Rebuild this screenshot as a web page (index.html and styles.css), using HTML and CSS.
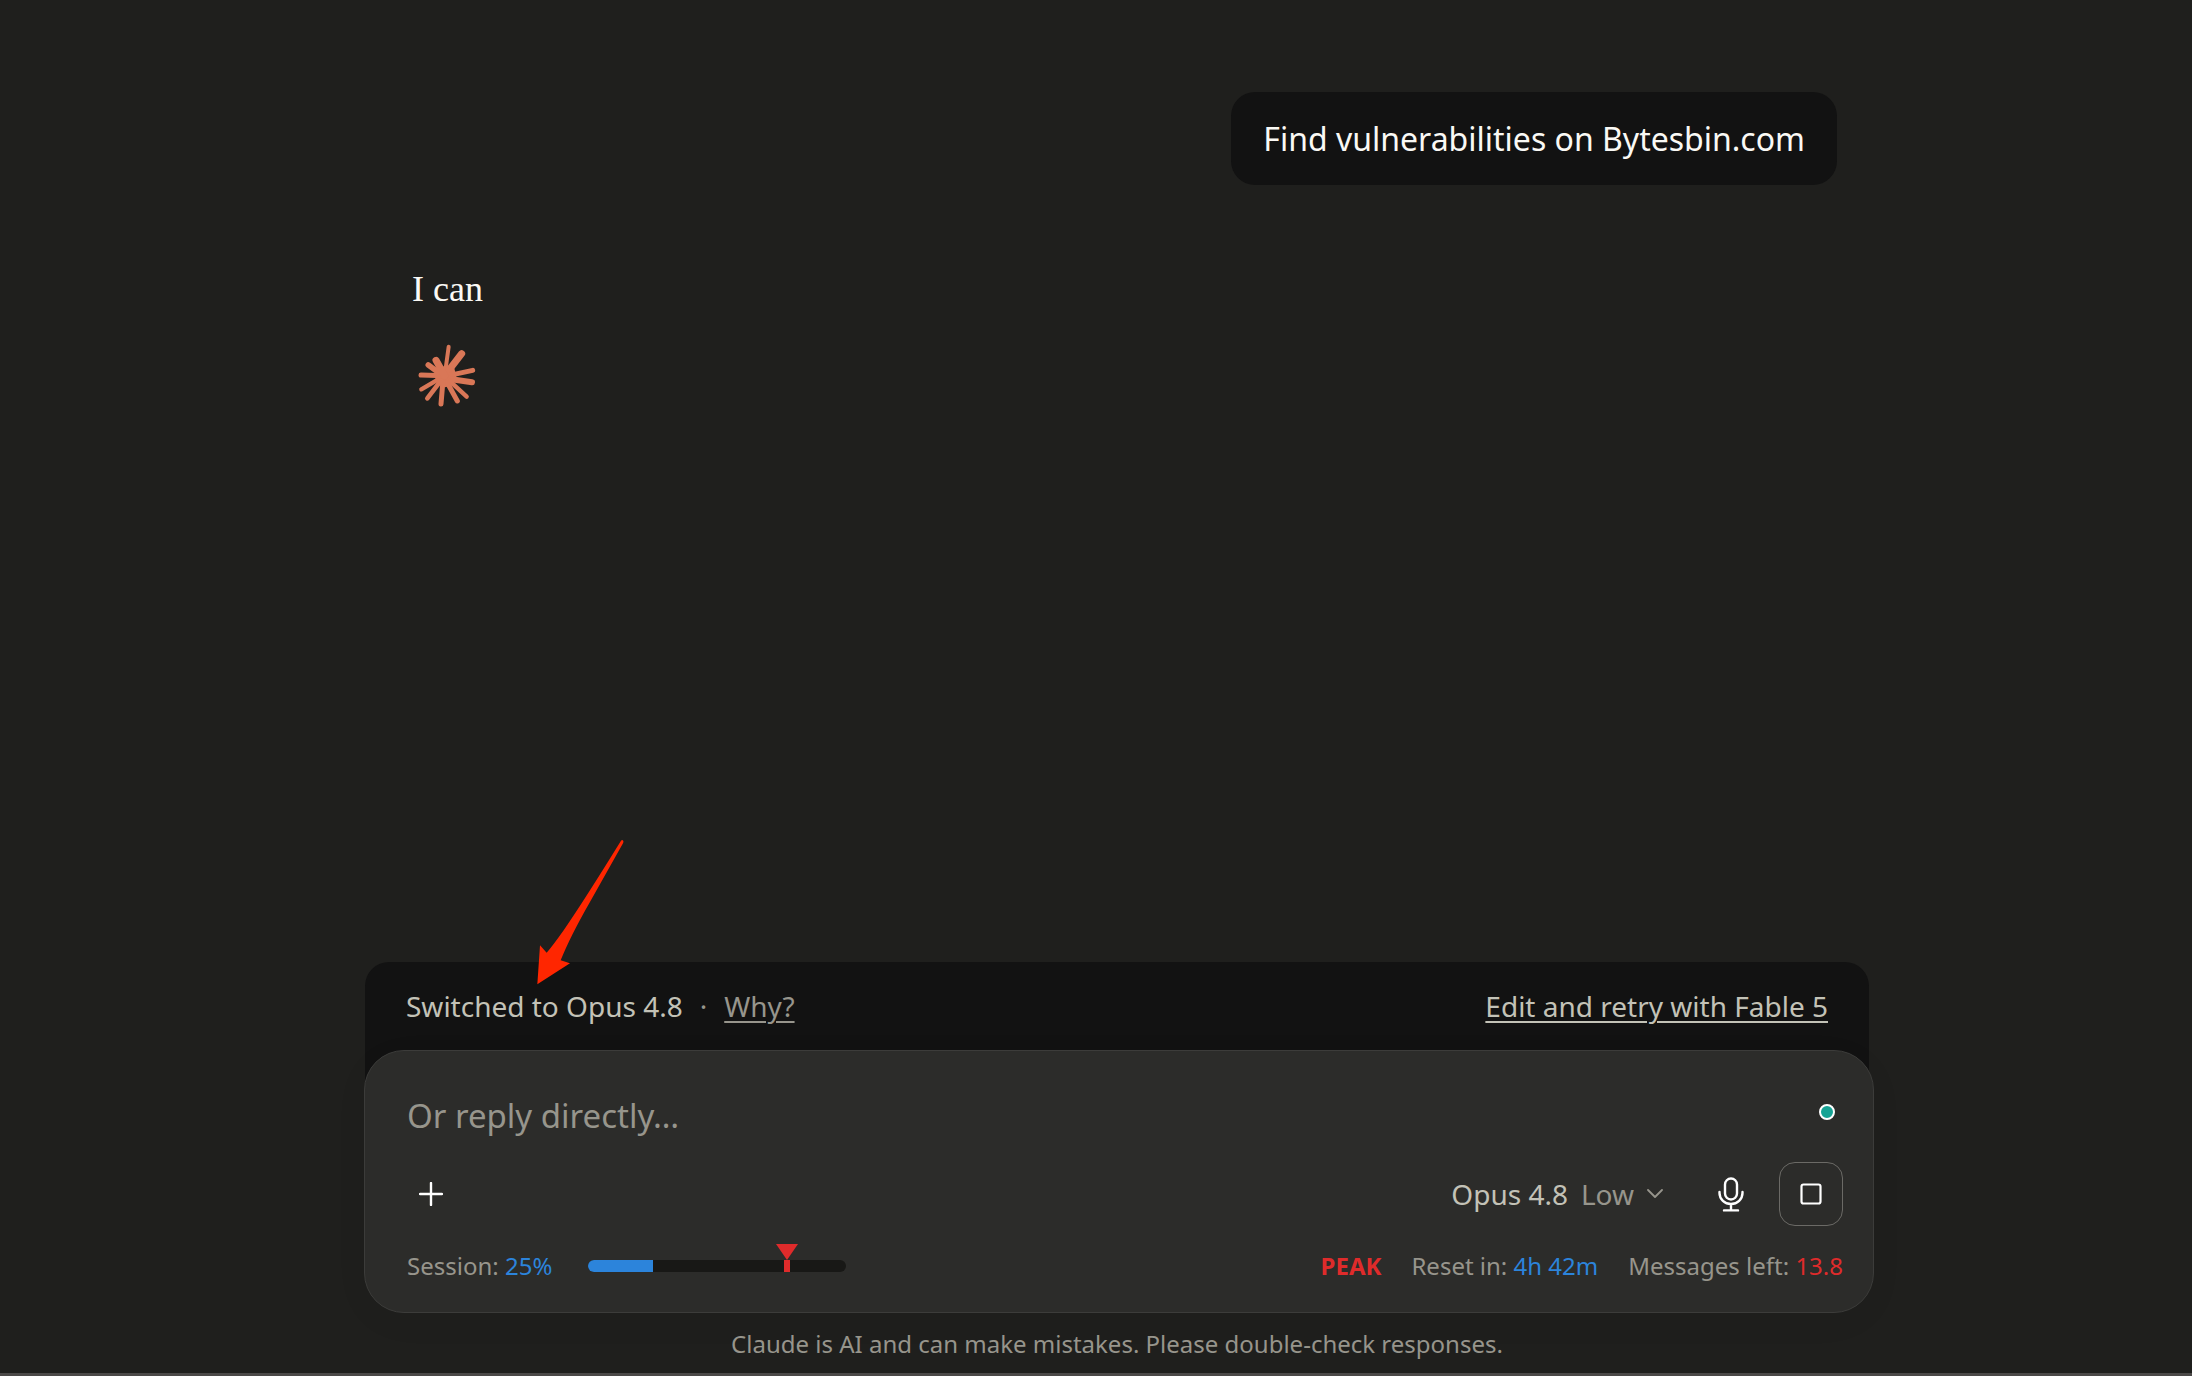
FILE: index.html
```html
<!DOCTYPE html>
<html lang="en">
<head>
  <meta charset="utf-8">
  <meta name="viewport" content="width=device-width, initial-scale=1">
  <title>Claude</title>
  <link rel="stylesheet" href="styles.css">
</head>
<body>
  <main class="page">
    <section class="thread">
      <p class="bubble">Find vulnerabilities on Bytesbin.com</p>
      <p class="reply">I can</p>
      <svg class="burst" viewBox="23 28 174 189" aria-hidden="true">
        <path d="M80 106 L106 92 L132 101 L138 126 L128 152 L104 158 L82 147 L72 124Z" fill="currentColor"/>
        <g stroke="currentColor" stroke-linecap="round" fill="none">
          <path stroke-width="12" d="M103 123 L115 36"/>
          <path stroke-width="21" d="M103 123 L154 57"/>
          <path stroke-width="15" d="M103 125 L187 107"/>
          <path stroke-width="18" d="M103 131 L185 143"/>
          <path stroke-width="13" d="M103 125 L169 186"/>
          <path stroke-width="15" d="M103 130 L141 199"/>
          <path stroke-width="15" d="M99 125 L92 208"/>
          <path stroke-width="14" d="M103 123 L51 191"/>
          <path stroke-width="13" d="M103 123 L33 164"/>
          <path stroke-width="15" d="M103 123 L32 121"/>
          <path stroke-width="17" d="M103 127 L54 91"/>
          <path stroke-width="21" d="M103 123 L77 77"/>
        </g>
      </svg>
    </section>

    <section class="dock">
      <div class="notice">
        <div class="notice-text">
          <span>Switched to Opus 4.8</span>
          <span class="muted">·</span>
          <a class="muted" href="#why">Why?</a>
        </div>
        <a href="#retry">Edit and retry with Fable 5</a>
        <svg class="arrow" viewBox="561 54 264 444" aria-hidden="true">
          <path fill="#ff2600" d="M562 493 L570 376 L590 398 Q608 377 640 332 Q700 245 813 62 Q817 58 820 63 Q821 66 819 70 L722 242 Q660 350 632 421 L660 430Z"/>
        </svg>
      </div>

      <form class="composer">
        <div class="entry">
          <input class="entry-input" type="text" aria-label="Reply" placeholder="Or reply directly…">
          <span class="dot"></span>
        </div>
        <div class="tools">
          <button class="icon-button" type="button" aria-label="Add">
            <svg width="24" height="24" viewBox="0 0 24 24"><path d="M12 1V23M1 12H23" stroke="currentColor" stroke-width="2.4" stroke-linecap="round"/></svg>
          </button>
          <button class="model" type="button" aria-haspopup="menu">
            <span>Opus 4.8</span>
            <span class="muted">Low</span>
            <svg class="chevron" width="16" height="10" viewBox="0 0 16 10"><path d="M1 1L8 8L15 1" fill="none" stroke="currentColor" stroke-width="1.8" stroke-linecap="round" stroke-linejoin="round"/></svg>
          </button>
          <button class="icon-button" type="button" aria-label="Dictate">
            <svg width="26" height="35" viewBox="0 0 26 35" fill="none" stroke="currentColor" stroke-width="2.4" stroke-linecap="round"><rect x="7" y="1.5" width="12" height="21" rx="6"/><path d="M1.5 15V16A11.5 11 0 0 0 24.5 16V15M13 27V33M6 33.4H20"/></svg>
          </button>
          <button class="stop" type="button" aria-label="Stop">
            <svg width="22" height="22" viewBox="0 0 22 22"><rect x="1.5" y="1.5" width="19" height="19" rx="2" fill="none" stroke="currentColor" stroke-width="2.2"/></svg>
          </button>
        </div>
        <div class="status">
          <span>Session: <span class="blue">25%</span></span>
          <div class="meter" role="meter" aria-label="Session" aria-valuenow="25">
            <div class="meter-fill" style="width: 25%"></div>
            <svg class="marker" style="left: 77%" width="22" height="28" viewBox="0 0 22 28" aria-hidden="true"><path d="M0 0H22L11 16ZM8 16H14V28H8Z" fill="currentColor"/></svg>
          </div>
          <div class="limits">
            <strong class="red">PEAK</strong>
            <span>Reset in: <span class="blue">4h 42m</span></span>
            <span>Messages left: <span class="red">13.8</span></span>
          </div>
        </div>
      </form>
      <p class="disclaimer">Claude is AI and can make mistakes. Please double-check responses.</p>
    </section>
  </main>
</body>
</html>
```
FILE: styles.css
```css
* {
  box-sizing: border-box;
}

body {
  margin: 0;
  background: #1f1f1d;
  color: #c3c2b7;
  font-family: "Noto Sans", sans-serif;
}

p {
  margin: 0;
}

button {
  padding: 0;
  border: 0;
  background: none;
  color: inherit;
  font: inherit;
}

svg {
  display: block;
}

.page {
  display: flex;
  flex-direction: column;
  justify-content: space-between;
  align-items: center;
  min-height: 100vh;
  padding-left: 46px;
  border-bottom: 3px solid #4b4948;
}

.thread,
.dock {
  width: 100%;
  max-width: 1510px;
}

.thread {
  display: flex;
  flex-direction: column;
  align-items: flex-start;
  padding: 92px 37px 40px 48px;
}

.bubble {
  align-self: flex-end;
  padding: 24px 32px;
  border-radius: 24px;
  background: #121212;
  color: #faf9f5;
  font-size: 32px;
  line-height: 45px;
}

.reply {
  margin-top: 80px;
  color: #faf9f5;
  font-family: "Liberation Serif", serif;
  font-size: 36px;
  line-height: 48px;
}

.burst {
  width: 58px;
  height: 63px;
  margin: 31px 0 0 6px;
  color: #d97757;
}

.notice {
  position: relative;
  display: flex;
  justify-content: space-between;
  margin: 0 5px -40px 1px;
  padding: 24px 41px 64px;
  border-radius: 24px 24px 0 0;
  background: #121212;
  font-size: 28px;
  line-height: 40px;
}

.notice-text {
  display: flex;
  gap: 17px;
}

.notice a {
  text-decoration-thickness: 2px;
  text-underline-offset: 4px;
}

a {
  color: inherit;
}

.muted,
.notice a.muted {
  color: #97958c;
}

.arrow {
  position: absolute;
  top: -124px;
  left: 172px;
  width: 88px;
  height: 148px;
}

.composer {
  position: relative;
  display: flex;
  flex-direction: column;
  gap: 24px;
  padding: 42px 30px 30px 42px;
  border: 1px solid #3c3c3a;
  border-radius: 40px;
  background: #2c2c2a;
  box-shadow: 0 8px 40px rgba(0, 0, 0, 0.03);
}

.entry {
  display: flex;
  align-items: flex-start;
  padding-right: 8px;
}

.entry-input {
  flex: 1;
  min-width: 0;
  height: 45px;
  padding: 0;
  border: 0;
  outline: 0;
  background: none;
  color: #faf9f5;
  font: 33px/44px "Noto Sans", sans-serif;
}

.entry-input::placeholder {
  color: #97958c;
  opacity: 1;
}

.dot {
  width: 16px;
  height: 16px;
  margin-top: 11px;
  border: 2px solid #fff;
  border-radius: 50%;
  background: #16a394;
}

.tools {
  display: flex;
  align-items: center;
}

.icon-button {
  display: grid;
  place-items: center;
  width: 48px;
  height: 64px;
  color: #fff;
}

.model {
  display: flex;
  align-items: center;
  gap: 13px;
  margin: 0 44px 0 auto;
  font-size: 28px;
  line-height: 40px;
}

.chevron {
  color: #97958c;
}

.stop {
  display: grid;
  place-items: center;
  width: 64px;
  height: 64px;
  margin-left: 24px;
  border: 1px solid #6b6a66;
  border-radius: 16px;
  color: #fff;
}

.status {
  display: flex;
  align-items: center;
  gap: 36px;
  color: #97958c;
  font-size: 24px;
  line-height: 32px;
}

.meter {
  position: relative;
  width: 258px;
  height: 12px;
  border-radius: 6px;
  background: #181816;
}

.meter-fill {
  height: 12px;
  border-radius: 6px 0 0 6px;
  background: #2c84db;
}

.marker {
  position: absolute;
  bottom: 0;
  margin-left: -11px;
  color: #df2b2b;
}

.limits {
  display: flex;
  gap: 30px;
  margin-left: auto;
}

.blue {
  color: #2c84db;
}

.red {
  color: #df2b2b;
}

.disclaimer {
  padding: 15px 4px 13px 0;
  color: #97958c;
  font-size: 24px;
  line-height: 32px;
  text-align: center;
}
```
